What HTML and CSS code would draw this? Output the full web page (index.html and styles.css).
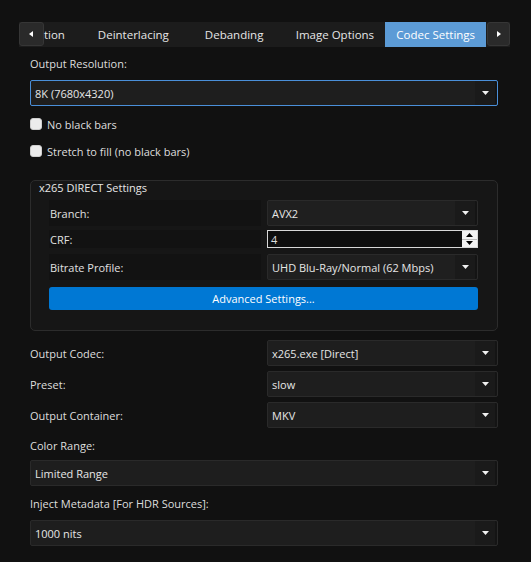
FILE: index.html
```html
<!DOCTYPE html>
<html>
<head>
<meta charset="utf-8">
<link rel="stylesheet" href="styles.css">
</head>
<body>
<div class="tabbar">
  <div class="scroll-btn"><svg width="4" height="6" viewBox="0 0 4 6"><path d="M4 0 L0 3 L4 6Z" fill="#fff"/></svg></div>
  <div class="tab tab-cut">tion</div>
  <div class="tab">Deinterlacing</div>
  <div class="tab">Debanding</div>
  <div class="tab">Image Options</div>
  <div class="tab active">Codec Settings</div>
  <div class="scroll-btn right"><svg width="4" height="6" viewBox="0 0 4 6"><path d="M0 0 L4 3 L0 6Z" fill="#fff"/></svg></div>
</div>

<div class="pane">
  <div class="label l-res">Output Resolution:</div>
  <div class="combo focus full"><span class="val">8K (7680x4320)</span><span class="arrow"><svg width="7" height="4" viewBox="0 0 7 4"><path d="M0 0 H7 L3.5 4Z" fill="#f0f0f0"/></svg></span></div>

  <div class="check c1"><span class="box"></span><span>No black bars</span></div>
  <div class="check c2"><span class="box"></span><span>Stretch to fill (no black bars)</span></div>

  <div class="group">
    <div class="group-title">x265 DIRECT Settings</div>
    <div class="grow">
      <div class="cell">Branch:</div>
      <div class="combo"><span class="val">AVX2</span><span class="arrow"><svg width="7" height="4" viewBox="0 0 7 4"><path d="M0 0 H7 L3.5 4Z" fill="#f0f0f0"/></svg></span></div>
    </div>
    <div class="grow small">
      <div class="cell">CRF:</div>
      <div class="spin"><span class="val">4</span><span class="spin-btns"><span class="sb"><svg width="7" height="4" viewBox="0 0 7 4"><path d="M0 4 H7 L3.5 0Z" fill="#000"/></svg></span><span class="sb"><svg width="7" height="4" viewBox="0 0 7 4"><path d="M0 0 H7 L3.5 4Z" fill="#000"/></svg></span></span></div>
    </div>
    <div class="grow">
      <div class="cell">Bitrate Profile:</div>
      <div class="combo"><span class="val">UHD Blu-Ray/Normal (62 Mbps)</span><span class="arrow"><svg width="7" height="4" viewBox="0 0 7 4"><path d="M0 0 H7 L3.5 4Z" fill="#f0f0f0"/></svg></span></div>
    </div>
    <div class="btn">Advanced Settings...</div>
  </div>

  <div class="rows">
    <div class="rlabel">Output Codec:</div>
    <div class="combo"><span class="val">x265.exe [Direct]</span><span class="arrow"><svg width="7" height="4" viewBox="0 0 7 4"><path d="M0 0 H7 L3.5 4Z" fill="#f0f0f0"/></svg></span></div>
    <div class="rlabel">Preset:</div>
    <div class="combo"><span class="val">slow</span><span class="arrow"><svg width="7" height="4" viewBox="0 0 7 4"><path d="M0 0 H7 L3.5 4Z" fill="#f0f0f0"/></svg></span></div>
    <div class="rlabel">Output Container:</div>
    <div class="combo"><span class="val">MKV</span><span class="arrow"><svg width="7" height="4" viewBox="0 0 7 4"><path d="M0 0 H7 L3.5 4Z" fill="#f0f0f0"/></svg></span></div>
  </div>

  <div class="label l-range">Color Range:</div>
  <div class="combo full"><span class="val">Limited Range</span><span class="arrow"><svg width="7" height="4" viewBox="0 0 7 4"><path d="M0 0 H7 L3.5 4Z" fill="#f0f0f0"/></svg></span></div>

  <div class="label l-meta">Inject Metadata [For HDR Sources]:</div>
  <div class="combo full"><span class="val">1000 nits</span><span class="arrow"><svg width="7" height="4" viewBox="0 0 7 4"><path d="M0 0 H7 L3.5 4Z" fill="#f0f0f0"/></svg></span></div>
</div>
</body>
</html>
```

FILE: styles.css
```css
html, body {
  margin: 0;
  padding: 0;
  background: #111111;
  color: #dedede;
  font-family: "Open Sans", "Noto Sans", "DejaVu Sans", sans-serif;
  font-size: 11px;
}

body {
  padding-top: 22px;
}

.tabbar {
  display: flex;
  margin-left: 19px;
  width: 491px;
  height: 25px;
  background: #1c1c1c;
}

.tab {
  box-sizing: border-box;
  width: 101px;
  height: 25px;
  line-height: 25px;
  text-align: center;
  color: #e6e6e6;
  white-space: nowrap;
  font-size: 11.5px;
}

.tab-cut {
  width: 39px;
  text-align: right;
  padding-right: 19px;
}

.tab.active {
  background: #5c9bd6;
  color: #ffffff;
}

.scroll-btn {
  box-sizing: border-box;
  width: 25px;
  height: 24px;
  background: #2a2a2a;
  border: 1px solid #363636;
  border-radius: 3px;
  display: flex;
  align-items: center;
  justify-content: center;
}

.scroll-btn.right {
  width: 23px;
  margin-left: 1px;
}

.pane {
  margin-left: 30px;
  width: 468px;
}

.label {
  height: 16px;
  line-height: 16px;
  color: #dedede;
}

.l-res { margin-top: 9px; }
.l-range { margin-top: 10px; }
.l-meta { margin-top: 10px; }

.combo {
  box-sizing: border-box;
  height: 26px;
  background: #1e1e1e;
  border: 1px solid #2a2a2a;
  border-radius: 2px;
  display: flex;
  align-items: center;
  color: #e6e6e6;
  box-shadow: inset -2px 0 0 #141414;
}

.combo.full { margin-top: 8px; }
.l-res + .combo { margin-top: 8px; }
.l-range + .combo { margin-top: 6px; }
.l-meta + .combo { margin-top: 8px; }

.combo.focus {
  border-color: #4a8fd9;
}

.combo .val {
  flex: 1;
  padding-left: 4px;
  white-space: nowrap;
}

.combo .arrow {
  width: 20px;
  height: 100%;
  display: flex;
  align-items: center;
  justify-content: center;
  background: #1a1a1a;
  margin-right: 2px;
}

.check {
  display: flex;
  align-items: center;
  gap: 5px;
  height: 14px;
  color: #dedede;
}

.c1 { margin-top: 11px; }
.c2 { margin-top: 13px; }

.box {
  box-sizing: border-box;
  width: 12px;
  height: 12px;
  background: #ececec;
  border: 1px solid #cfcfcf;
  border-radius: 3px;
}

.group {
  box-sizing: border-box;
  margin-top: 22px;
  height: 151px;
  background: #161616;
  border: 1px solid #2c2c2c;
  border-radius: 5px;
  padding: 0 19px 0 18px;
}

.group-title {
  height: 14px;
  line-height: 14px;
  margin-left: -10px;
  color: #e6e6e6;
}

.grow {
  display: grid;
  grid-template-columns: 212px 211px;
  column-gap: 6px;
  height: 26px;
  margin-top: 6px;
}

.group-title + .grow { margin-top: 5px; }

.grow.small {
  height: 18px;
  margin-top: 4px;
}

.cell {
  background: #121212;
  display: flex;
  align-items: center;
  padding-left: 1px;
  color: #e0e0e0;
}

.grow .combo {
  height: 26px;
  background: #1f1f1f;
}

.spin {
  box-sizing: border-box;
  height: 18px;
  background: #0e0e0e;
  border: 1px solid #d8d8d8;
  display: flex;
  align-items: center;
  color: #dcdcdc;
}

.spin .val {
  flex: 1;
  padding-left: 3px;
}

.spin-btns {
  width: 15px;
  height: 100%;
  background: #f2f2f2;
  display: flex;
  flex-direction: column;
}

.sb {
  flex: 1;
  display: flex;
  align-items: center;
  justify-content: center;
}

.sb + .sb {
  border-top: 1px solid #bcbcbc;
}

.btn {
  margin-top: 7px;
  height: 23px;
  line-height: 23px;
  text-align: center;
  background: #0078d4;
  border-radius: 3px;
  color: #ffffff;
}

.rows {
  display: grid;
  grid-template-columns: 237px 231px;
  grid-auto-rows: 26px;
  row-gap: 5px;
  margin-top: 9px;
}

.rlabel {
  display: flex;
  align-items: center;
  color: #dedede;
}
```
